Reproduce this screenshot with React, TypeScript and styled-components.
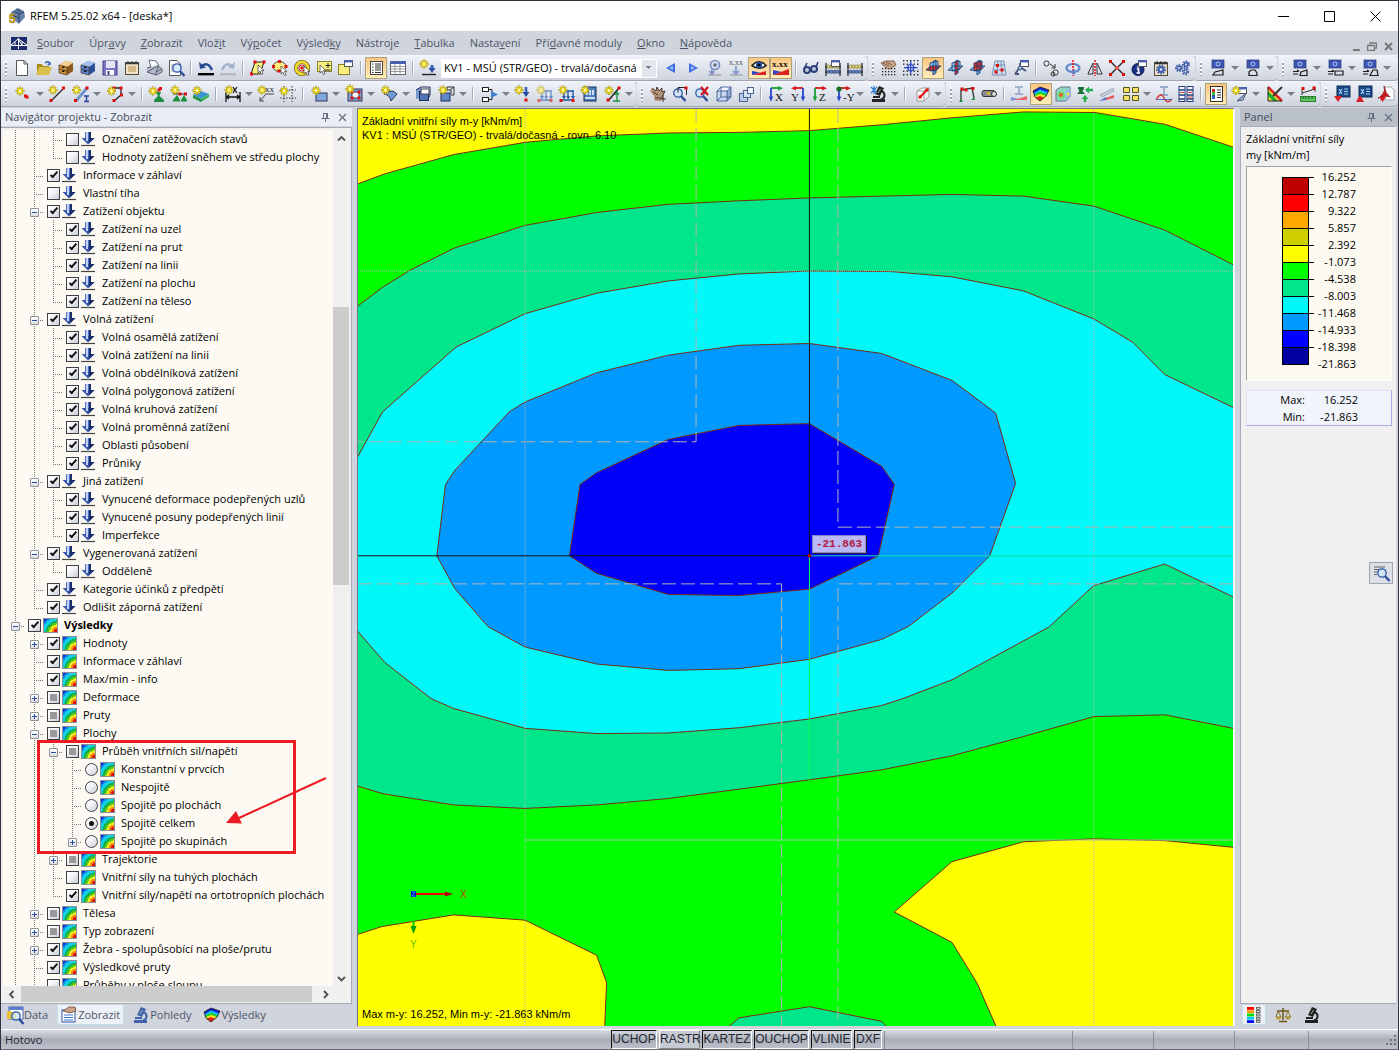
import React from "react";
import styled, { createGlobalStyle } from "styled-components";

const UI = `"Open Sans", "Noto Sans", sans-serif`;

const GlobalStyle = createGlobalStyle`
  *, *::before, *::after { box-sizing: border-box; }
  body { margin: 0; overflow: hidden; }
  button, input, select { font: inherit; color: inherit; }
`;

/* ---------- drawing helpers ---------- */

type P = { d: string; c?: string; w?: number };
const L = ({ d, c = "#222", w = 1 }: P) => <path d={d} fill="none" stroke={c} strokeWidth={w} />;
const F = ({ d, c = "#222" }: P) => <path d={d} fill={c} />;
const Star = ({ x = 4, y = 4 }: { x?: number; y?: number }) => (
  <g transform={`translate(${x} ${y})`}>
    <path d="M0-4.5V4.5M-4.5 0H4.5M-3-3L3 3M3-3L-3 3" stroke="#9a8a1c" strokeWidth="1.8" />
    <path d="M0-4V4M-4 0H4M-2.7-2.7L2.7 2.7M2.7-2.7L-2.7 2.7" stroke="#ffe92e" strokeWidth="1.1" />
    <circle r="1.2" fill="#fffbb0" />
  </g>
);
const Dots = ({ at }: { at: number[][] }) => (
  <>{at.map(([x, y]) => <rect key={`${x}-${y}`} x={x - 1.5} y={y - 1.5} width="3" height="3" fill="#e00d0d" />)}</>
);
const Cursor = ({ x = 9, y = 6 }: { x?: number; y?: number }) => (
  <path transform={`translate(${x} ${y})`} d="M0 0V8L2 6.2L3.4 9.5L5 8.8L3.6 5.6H6Z" fill="#fff" stroke="#333" strokeWidth=".7" />
);
const Lens = ({ x = 7, y = 6 }: { x?: number; y?: number }) => (
  <g>
    <path d={`M${x + 3} ${y + 3}L${x + 7.5} ${y + 8}`} stroke="#2a4d9b" strokeWidth="2.4" />
    <circle cx={x} cy={y} r="4.2" fill="#cfe3fb" fillOpacity=".8" stroke="#2f56a8" strokeWidth="1.3" />
  </g>
);
const Win = ({ x = 7, y = 1 }: { x?: number; y?: number }) => (
  <g>
    <rect x={x + 0.5} y={y + 0.5} width="8" height="6" fill="#fff" stroke="#555" />
    <rect x={x} y={y} width="9" height="2.4" fill="#4a5fae" />
  </g>
);
const Cabinet = ({ a, b, e }: { a: string; b: string; e: string }) => (
  <g>
    <F d="M1 5L8 1L15 3V11L9 15L1 13Z" c={a} />
    <F d="M1 5L8 1L15 3L9 7Z" c={b} />
    <F d="M9 7L15 3V11L9 15Z" c={e} />
    <L d="M1 5L9 7V15L1 13ZM1 9L9 11" c="#43331e" w={0.7} />
    <path d="M4 7.2H6.4M4 11.2H6.4" stroke="#111" strokeWidth="1.6" />
  </g>
);
const Gear = ({ x, y, r, c = "#3f5fa8" }: { x: number; y: number; r: number; c?: string }) => (
  <g>
    <circle cx={x} cy={y} r={r} fill="none" stroke={c} strokeWidth="2" strokeDasharray="1.6 1.1" />
    <circle cx={x} cy={y} r={r - 0.6} fill={c} />
    <circle cx={x} cy={y} r={r / 3} fill="#eef" />
  </g>
);
const Planes = ({ hot }: { hot: string }) => (
  <g>
    <F d="M5 3L13 1V9L5 11Z" c="#9fd0ef" />
    <F d="M8 1.5L11 0V13L8 15Z" c="#6fb0dd" />
    <F d="M1 10L6 6H15L10 11Z" c="#8ec6ea" />
    <F d={hot} c="#e0301e" />
    <L d="M5 3L13 1V9L5 11ZM8 1.5L11 0V13L8 15ZM1 10L6 6H16L10 11Z" c="#1b3f78" w={0.9} />
  </g>
);
const Abacus = () => (
  <g>
    <L d="M1 3V16M15 3V16M0 7H16M0 12H16" c="#1c1c1c" w={1.2} />
    {[4, 7, 10, 13].map((x, i) => <circle key={x} cx={x - 0.4} cy="6.6" r="1.7" fill={i % 2 ? "#f1d44a" : "#e8e06c"} stroke="#554" strokeWidth=".5" />)}
    {[4, 7, 10, 13].map((x) => <circle key={x} cx={x - 0.4} cy="11.8" r="1.7" fill="#6883c9" stroke="#235" strokeWidth=".5" />)}
  </g>
);
const CubeWire = ({ c = "#3e5c96" }: { c?: string }) => (
  <g>
    <F d="M1 5H11V15H1Z" c="#c9d8ef" />
    <F d="M1 5L5 1H15L11 5Z" c="#eef4fc" />
    <F d="M11 5L15 1V11L11 15Z" c="#93abd2" />
    <L d="M1 5H11V15H1ZM1 5L5 1H15L11 5M15 1V11L11 15M5 1V11H15M5 11L1 15" c={c} w={0.9} />
  </g>
);
const Axes = ({ a, b, t, flip }: { a: string; b: string; t: string; flip?: boolean }) => (
  <g>
    <g transform={flip ? "translate(16 0) scale(-1 1)" : undefined}>
      <path d="M3 2H12" stroke={a} strokeWidth="1.8" />
      <path d="M10 0L15 2.2L10 4.6Z" fill={a} />
      <path d="M3 2V12" stroke={b} strokeWidth="1.8" />
      <path d="M.8 10.5H5.2L3 15.5Z" fill={b} />
    </g>
    <text x={flip ? 1 : 7} y="15" fontFamily="Liberation Serif, serif" fontSize="11" fill="#111">{t}</text>
  </g>
);
const Monitor = ({ r }: { r: string }) => (
  <g>
    <rect x="1" y="0" width="12" height="8" fill="#3d57b8" stroke="#28366e" strokeWidth=".7" />
    <circle cx="7" cy="4" r="2" fill="none" stroke="#b9c7f3" />
    <L d={r} c="#1a1a1a" w={1.2} />
  </g>
);
const Microscope = ({ c = "#222" }: { c?: string }) => (
  <g>
    <path d="M1 13H14V16H1ZM8 0L13 2L9 10L4 8Z" fill={c} />
    <path d="M11 5C15 8 14 12 10 13.500M2 11H9" fill="none" stroke={c} strokeWidth="2" />
    <path d="M9.500 3L7 7" stroke="#aaa" />
  </g>
);
const Rainbow = () => (
  <g>
    <F d="M0 5L7 1L16 4L13 10L7 15L2 11Z" c="#1420d8" />
    <F d="M1 7L7 3.500L15 6.500L13 10L7 15L2 11Z" c="#10c8f0" />
    <F d="M1.500 8.500L7 5.500L14 8.500L13 10L7 15L2 11Z" c="#22d12c" />
    <F d="M2 10L7 8L13 10L7 15L2 11Z" c="#f8e81b" />
    <F d="M2.500 11.500L7 10L11 11.700L7 15Z" c="#e8221a" />
    <L d="M0 5L7 1L16 4L13 10L7 15L2 11Z" c="#222" w={0.8} />
  </g>
);
const Supports = ({ c = "#1e56a5" }: { c?: string }) => (
  <g>
    <L d="M5 5H15M5 5V12M9 5V12M14 5V12M2 14H15" c={c} w={1.3} />
    <F d="M3 10H7L5 13.5ZM7.5 10H11L9.2 13.5ZM12 10H16L14 13.5Z" c={c} />
  </g>
);
const Sheet = ({ tri, c }: { tri: string; c: string }) => (
  <g>
    <rect x="3" y="0" width="13" height="11" fill="#174a86" stroke="#0c2c56" />
    <L d="M5 3L8 8M8 3L5 8M10 3H14M10 5.5H14M10 8H14" c="#a9d0f5" w={1.1} />
    <F d={tri} c={c} />
  </g>
);

const ICONS: Record<string, React.ReactNode> = {
  newdoc: <><path d="M2.5.5H10L13.5 4V15.5H2.5Z" fill="#fff" stroke="#555" /><L d="M10 .5V4H13.5" c="#555" /></>,
  open: <><F d="M1 4H6L7 6H13V14H1Z" c="#a78a1c" /><F d="M3 7H16L13 15H0Z" c="#d9c04a" /><L d="M9 3Q12 0 14 4M14 5V2M14 4.5H11.5" c="#3263ae" w={1.4} /></>,
  boxO: <Cabinet a="#cf8f37" b="#f2cf90" e="#8d5a1d" />,
  boxB: <Cabinet a="#5b7fce" b="#a8c0f0" e="#2f4f9b" />,
  save: <><rect x="1" y="1" width="14" height="14" fill="#7a74c4" stroke="#454080" /><rect x="4" y="1" width="9" height="7" fill="#dfe6f6" /><rect x="4" y="10" width="8" height="5" fill="#fff" /><rect x="5.5" y="11" width="2" height="4" fill="#454080" /></>,
  clip: <><rect x="1.5" y="2.5" width="13" height="12" fill="#efe4c8" stroke="#4f4a3b" /><L d="M2 3.5H14" c="#333" w={1.5} /><L d="M4 1V4M8 1V4M12 1V4" c="#444" /><L d="M4 7H12M4 9H12M4 11H12" c="#b98a48" /></>,
  print: <><F d="M3 0L10 1L13 7L5 8Z" c="#fff" /><L d="M3 0L10 1L13 6M3 0L5 8" c="#667" /><F d="M1 8L11 5L16 9V12L10 15L1 12Z" c="#b6bdcc" /><L d="M1 8L5 7M12 6L16 9V12L10 15L1 12ZV8L10 12L15 9.500M10 12V15" c="#555c70" /></>,
  preview: <><path d="M1.5.5H9L12.5 4V15.5H1.5Z" fill="#fff" stroke="#555" /><L d="M3 5H8M3 7H8M3 9H7M3 11H7" c="#999" /><Lens x={9} y={8} /></>,
  undo: <><path d="M4 6Q10 1 14 10" fill="none" stroke="#254a93" strokeWidth="2.4" /><F d="M1 2L2 9L8 7.500Z" c="#254a93" /><rect y="13" width="16" height="2.4" fill="#000" /></>,
  redo: <><path d="M12 6Q6 1 2 10" fill="none" stroke="#a3b2cb" strokeWidth="2.4" /><F d="M15 2L14 9L8 7.500Z" c="#a3b2cb" /><rect y="13" width="16" height="2.4" fill="#b5b9c2" /></>,
  para: <><path d="M5 2H14L10 14H1Z" fill="#fbf07a" stroke="#222" /><Dots at={[[5, 2], [14, 2], [1.5, 14]]} /><Cursor x={8} y={5} /></>,
  lasso: <><ellipse cx="7.5" cy="6.5" rx="6.5" ry="5" fill="#fbf07a" stroke="#555" /><Dots at={[[7.5, 1.5], [1.5, 6.5], [14, 6.5], [7, 11]]} /><Cursor x={9} y={6} /></>,
  ring: <><circle cx="8" cy="8" r="6" fill="none" stroke="#57480f" strokeWidth="4" /><circle cx="8" cy="8" r="6" fill="none" stroke="#f2dc2c" strokeWidth="2.8" /><circle cx="8" cy="8" r="3" fill="#fff" stroke="#c22" /><Dots at={[[8, 8]]} /><Cursor x={10} y={6} /></>,
  selplus: <><rect x="1.5" y="1.5" width="14" height="10" fill="#fbf07a" stroke="#8a8330" /><path d="M12 3V8M9.5 5.5H14.5M9.5 10H14.5" stroke="#222" /><Cursor x={4} y={5} /></>,
  win: <><rect x="0.5" y="4.5" width="11" height="10" fill="#f8ec7c" stroke="#8a8330" /><Win x={6} y={0} /></>,
  nav: <><rect x="2.5" y="1.5" width="12" height="13" fill="#fff" stroke="#444" /><L d="M4 4H5.5M4 7H5.5M4 10H5.5M4 12.5H5.5M7 4H13M7 6H13M7 8H13M7 10H13M7 12.5H13" c="#333" /></>,
  table: <><rect x=".5" y="1.5" width="15" height="13" fill="#fff" stroke="#666" /><rect x="0" y="1" width="16" height="3" fill="#4a5fae" /><L d="M1 6.5H15M1 9H15M1 11.5H15M5 4V14M10 4V14" c="#999" /></>,
  load: <><Star /><path d="M12 5V9" stroke="#3b63bb" strokeWidth="3" /><F d="M8.5 8H15.5L12 13Z" c="#2a4da0" /><L d="M2 14.5H16" c="#222" w={1.4} /></>,
  left: <><F d="M12 3V13L3 8Z" c="#3d6fe0" /><F d="M10 6V10L6 8Z" c="#9dbcf5" /></>,
  right: <><F d="M4 3V13L13 8Z" c="#3d6fe0" /><F d="M6 6V10L10 8Z" c="#9dbcf5" /></>,
  eyeload: <g opacity=".65"><circle cx="8" cy="5" r="4.5" fill="#cdd9ee" stroke="#3d5f9f" strokeWidth="1.6" /><circle cx="8" cy="5" r="1.8" fill="#234" /><L d="M5 8V13M2.5 11L5 14L7.5 11" c="#4e70b8" w={1.8} /><L d="M1 15H14" c="#666" /></g>,
  xload: <g opacity=".7"><text x="0" y="5" fontFamily="Liberation Serif" fontWeight="bold" fontSize="8" fill="#555">x.xx</text><L d="M7 6V13M4 11L7 14L10 11" c="#6a88c8" w={2} /><L d="M1 15H14" c="#777" /></g>,
  eye: <><path d="M1 5.500Q8-2 15 5.500Q8 11 1 5.500Z" fill="#fff" stroke="#222" strokeWidth="1.6" /><circle cx="8" cy="5" r="3.200" fill="#2a56a8" /><circle cx="8" cy="5" r="1.5" fill="#000" /><F d="M1 15L15 11V15Z" c="#d22" /><F d="M1 11V15L9 12.500Z" c="#2b46c5" /></>,
  xxx: <><text x="-1" y="6.5" fontFamily="Liberation Serif" fontWeight="bold" fontSize="9" fill="#111">x.xx</text><F d="M0 10V15L9 12Z" c="#2b46c5" /><F d="M0 15L16 9V15Z" c="#d22" /></>,
  glasses: <><circle cx="4" cy="10" r="3" fill="#bcd" stroke="#2b3f78" strokeWidth="2" /><circle cx="11" cy="9" r="3" fill="#bcd" stroke="#2b3f78" strokeWidth="2" /><L d="M1.500 8L4 3M13 7L15 2" c="#2b3f78" w={1.6} /></>,
  abacusW: <><Abacus /><Win x={6} y={0} /></>,
  abacus: <Abacus />,
  handgrid: <><g fill="#222">{[0, 3, 6, 9, 12].map((x) => [8, 11, 14].map((y) => <rect key={`${x}${y}`} x={x + 1} y={y} width="1.3" height="1.3" />))}</g><F d="M0 3L5 1L13 1L15 5L9 9L4 7Z" c="#c9a488" /><L d="M2 3L8 6M5 2L11 5M0 3L5 1H13L15 5L9 9L4 7Z" c="#6d4a36" w={0.8} /></>,
  gridcross: <><g fill="#222">{[0, 3.5, 7, 10.5, 14].map((x) => [0, 3.5, 10.5, 14].map((y) => <rect key={`${x}-${y}`} x={x} y={y} width="1.4" height="1.4" />))}</g><circle cx="7.7" cy="7.7" r="3" fill="#fff" stroke="#2b46c5" strokeWidth="1.3" /><L d="M7.7 1V14.5M1 7.7H14.5" c="#2b46c5" w={1.2} /></>,
  planeH: <Planes hot="M1 10L6 6H15L10 11Z" />,
  planeV: <Planes hot="M8 1.5L11 0V13L8 15Z" />,
  planeF: <Planes hot="M5 3L13 1V9L5 11Z" />,
  mesh: <><path d="M4 1H13L15 15H1Z" fill="#cfe0f2" stroke="#7d93b5" /><L d="M7 1L6 15M10 1L11 15M3 5H14M2 10H15" c="#7d93b5" /><Dots at={[[6.5, 5.5], [11, 10], [5, 12]]} /></>,
  cubes: <><L d="M2 14L7 7M7 7V3M7 7L13 11M2 14H6" c="#445577" w={1.8} /><Win x={7} y={0} /><circle cx="7" cy="8" r="2" fill="#a9c0e6" stroke="#445577" /></>,
  circ2: <><circle cx="3.5" cy="3.5" r="2.6" fill="none" stroke="#333" /><circle cx="12.5" cy="12.5" r="2.6" fill="#eee" stroke="#333" /><circle cx="10" cy="14" r="2" fill="none" stroke="#333" /><L d="M7 4L12 7.5M12 4V8H8.5" c="#333" /></>,
  rotate: <><ellipse cx="8" cy="8" rx="6.5" ry="4" fill="none" stroke="#5b86c9" strokeWidth="2.2" /><path d="M8 0V16" stroke="#e00" strokeDasharray="2 1" strokeWidth="1.4" /><F d="M10 9V15L5 12Z" c="#5b86c9" /></>,
  mirror: <><path d="M8 0V16" stroke="#e00" strokeDasharray="2 1" strokeWidth="1.4" /><L d="M6 3V14H.8ZM10 3V14H15.2Z" c="#333" /></>,
  redX: <><L d="M2 2L14 14M14 2L2 14" c="#222" w={1.4} /><circle cx="8" cy="8" r="2" fill="#e55" /><Dots at={[[1.5, 1.5], [14.5, 1.5], [1.5, 14.5], [14.5, 14.5]]} /></>,
  info: <><circle cx="7" cy="9.5" r="6" fill="#1a2f86" stroke="#0d1848" /><path d="M7 6V7.8M5.8 9H7.6V13M5.5 13H9" stroke="#fff" strokeWidth="1.6" fill="none" /><Win x={7} y={0} /></>,
  gearwin: <><rect x="1.5" y="2.5" width="13" height="13" fill="#efe4c8" stroke="#4f4a3b" /><L d="M2 3.500H14" c="#333" w={1.500} /><L d="M4 1V3M8 1V3M12 1V3" c="#333" /><Gear x={8} y={9.500} r={4} /></>,
  gears: <><Gear x={4} y={8} r={3} /><Gear x={11} y={4.5} r={3} /><Gear x={10.5} y={11.5} r={2.7} /></>,
  vA: <Monitor r="M2 15H12V10L4 12Z" />,
  vB: <Monitor r="M3 15.5H11V13L9 10H5L3 12Z" />,
  vC: <Monitor r="M0 11.5H5M0 14H5M4 10L6 11.5M7 15.5H14V10L8 12Z" />,
  vD: <Monitor r="M0 11.5H5M0 14H5M4 10L6 11.5M7 15H15V11H7Z" />,
  vE: <Monitor r="M0 11.5H5M0 14H5M4 10L6 11.5M7 15.5H15L14 10H10Z" />,
  pt: <><Star x={4} y={5} /><Dots at={[[11, 11], [9.5, 10]]} /></>,
  line: <><L d="M2 15L15 2" w={1.3} /><Dots at={[[2, 14.5], [14.5, 2]]} /><Star x={4} y={4} /></>,
  lineI: <><L d="M3 15L14 2" c="#6f97cf" w={3} /><Dots at={[[2.5, 14.5], [14, 2]]} /><Star x={3.5} y={4} /><L d="M11 10H16M11 15.5H16M13.5 10V15.5" c="#26439a" w={1.4} /></>,
  poly: <><L d="M4 2H13V9L6 15" w={1.3} /><Dots at={[[13, 2], [13.5, 9], [6, 14.5], [6, 2]]} /><Star x={3.5} y={5} /></>,
  nodeSup: <><Dots at={[[11.5, 2.5], [10, 4]]} /><F d="M7 6H12L10.5 10L15 14V16H5V14L9 10Z" c="#1d8f3e" /><Star x={4} y={5} /></>,
  lineSup: <><L d="M2 8H15" /><Dots at={[[9, 8], [14.5, 8]]} /><F d="M6 9L9 14V15.5H2V14ZM13 9L16 14V15.5H10V14Z" c="#1d8f3e" /><Star x={4} y={4} /></>,
  surf: <><F d="M0 9L8 5L16 8L8 13Z" c="#3d97d6" /><F d="M0 9L8 13V16L0 12Z" c="#1d8f3e" /><F d="M8 13L16 8V11L8 16Z" c="#34b457" /><Star x={4} y={4.5} /></>,
  dim: <><L d="M1 6V16M15 6V16M1 11H15M4 9L1.500 11L4 13M12 9L14.500 11L12 13" c="#111" w={1.3} /><L d="M8 1L12 7M12 1L8 7" c="#111" w={1.2} /><Star x={4} y={4} /></>,
  dimxx: <><L d="M2 15L8 8H16M2 11V15H6" c="#444" /><text x="7" y="6" fontFamily="Liberation Serif" fontSize="9" fill="#222">xx</text><Star x={4} y={4} /></>,
  gridstar: <><path d="M4 0V16M12 0V16M0 4H16M0 12H16" stroke="#333" strokeDasharray="1.500 1.500" fill="none" /><Star x={4} y={5} /></>,
  area: <><rect x="4" y="7" width="11" height="8" fill="#7fa9dd" stroke="#335" /><Star x={4} y={4.5} /></>,
  opening: <><rect x="1" y="3" width="14" height="12" fill="#7fa9dd" stroke="#335" /><rect x="5" y="6" width="7" height="6" fill="#fff" stroke="#335" /><Dots at={[[5, 6], [12, 6], [5, 12], [12, 12]]} /><Star x={3} y={3} /></>,
  shell: <><path d="M2 8Q10 2 15 8L9 15Q8 9 2 8Z" fill="#6d9bd8" stroke="#335" /><Star x={3.500} y={4} /></>,
  solid: <><F d="M1 4L6 1V12L1 13Z" c="#7898cd" /><rect x="4.500" y="5.500" width="9" height="9" fill="#4f74b5" stroke="#1d2f5c" /><path d="M1 4L6 1H15V9L13 13" fill="none" stroke="#1d2f5c" /><rect x="6" y="3" width="8" height="5" fill="#fff" stroke="#445" /></>,
  solidset: <><rect x="2" y="7" width="9" height="8" fill="#5f88c9" stroke="#1d2f5c" /><path d="M8 5V1H15V9H12" fill="none" stroke="#333" /><path d="M11 4L15 1M8 4H12V8" fill="none" stroke="#333" /><Star x={4} y={4} /></>,
  joint: <><rect x=".5" y="1.500" width="6" height="4" fill="#fff" stroke="#222" /><rect x=".5" y="11.500" width="6" height="4" fill="#fff" stroke="#222" /><L d="M7 3.500H10V6M7 13.500H10V11" /><F d="M9 5L16 8.500L9 12Z" c="#3d7ed0" /></>,
  starload: <><Star x={4} y={4} /><path d="M11 1V7" stroke="#3b63bb" strokeWidth="2.600" /><F d="M7.500 6H14.500L11 11Z" c="#2a4da0" /><Dots at={[[11, 14]]} /></>,
  loadg: <g opacity=".6"><Supports /><Star x={4} y={4} /><Dots at={[[2, 14.500], [14, 14.500]]} /></g>,
  load2: <><Supports /><Star x={4} y={4} /><Dots at={[[2, 14.500], [14, 14.500]]} /></>,
  load3: <><rect x="3" y="1" width="12" height="14" fill="#4d7fc0" stroke="#1d2f5c" /><L d="M6 4V9M9 4V9M12 4V9M4 12H14" c="#fff" w={1.500} /><Star x={4} y={4} /></>,
  loadline: <><L d="M3 15L14 2" c="#222" w={1.500} /><Dots at={[[14, 2], [3, 14]]} /><L d="M12 6V15M8 15H15M10 9L12 6L14 9" c="#1d8f3e" w={1.300} /><Star x={4} y={4.500} /></>,
  hand: <><F d="M2 2L6 5L7 1L9 5L12 2L12 6L15 5L12 11L11 15H5L4 10L0 5Z" c="#b3927a" /><L d="M2 2L6 5L7 1L9 5L12 2V6L15 5L12 11M3 6L8 9M5 12H14M13 9V16M10 13H16" c="#4c3426" w={1} /></>,
  zoomwin: <><Lens x={6} y={7} /><path d="M6 6.500V1.500H14.500V9" fill="none" stroke="#222" /><Dots at={[[14, 2]]} /></>,
  zoomX: <><Lens x={6} y={7} /><L d="M7 1L14 9M14 1L7 9" c="#d2131b" w={2.200} /></>,
  cube: <CubeWire />,
  cubes2: <><rect x="1.500" y="7.500" width="8" height="8" fill="#b9cbe6" stroke="#4c638f" /><rect x="5.500" y="4.500" width="7" height="7" fill="#d5e1f3" stroke="#4c638f" /><rect x="9.500" y="1.500" width="6" height="6" fill="#eef3fb" stroke="#4c638f" /></>,
  axX: <Axes a="#17a035" b="#2743c9" t="X" />,
  axY: <Axes a="#d41c1c" b="#2743c9" t="Y" flip />,
  axZ: <Axes a="#d41c1c" b="#17a035" t="Z" />,
  axmY: <><Axes a="#d41c1c" b="#2743c9" t="-Y" /><circle cx="3" cy="3" r="2.600" fill="#156f26" /></>,
  micro: <><Microscope /><L d="M0 1L6 7M6 1L0 7M3 0V8" c="#2b7ad1" w={1.200} /></>,
  cubeRed: <><path d="M3 5L8 2H15V10L10 15H3Z" fill="#fff" stroke="#999" /><L d="M3 5H10V15M10 5L15 2" c="#999" /><L d="M6 11L13 4" c="#d11" w={2} /><Dots at={[[6, 11], [13, 4]]} /></>,
  frame: <><L d="M2 15V4L13 2L15 12" c="#333" w={1.300} /><Dots at={[[3, 3], [7, 4], [14, 2.500]]} /><F d="M0 16L2 13L4 16ZM12 14L15 11L16 14Z" c="#1d8f3e" /></>,
  tube: <><rect x="1" y="4.500" width="13" height="6" rx="2" fill="#8c8c8c" stroke="#333" /><circle cx="13" cy="8" r="2.500" fill="#ddd" stroke="#333" /><rect x="6" y="6.500" width="3" height="2" fill="#e4c500" /></>,
  Idia: <><L d="M4 1H12M8 1V8M4 8H12" c="#8ea3c4" w={1.500} /><F d="M0 11V15L8 13Z" c="#7d90d8" /><F d="M3 14L16 10V14Z" c="#e66" /></>,
  surfcol: <Rainbow />,
  cubecol: <><path d="M1 4L6 1H15V11L11 15H1Z" fill="#8fd6c9" stroke="#678" /><circle cx="6" cy="9" r="3.800" fill="#6ee06e" /><circle cx="6" cy="9" r="2" fill="#ee5a3a" /><path d="M11 5L15 2V11L11 15Z" fill="#9ab4e8" /><circle cx="13" cy="8" r="1.500" fill="#f3e83c" /></>,
  treearr: <><F d="M1 1H7V3L5.500 5L8 8H0L2.500 5L1 3Z" c="#1d6f35" /><L d="M11 4H16M8 16V12" c="#21b04a" w={2.400} /><F d="M8 4L12 0.500V7.500ZM4.500 13L8 9L11.500 13Z" c="#21b04a" /></>,
  bars: <><path d="M1 9L14 2L15 5L3 11Z" fill="#c3cbd8" stroke="#8a94a8" strokeWidth=".6" /><F d="M0 15L7 11V14Z" c="#5670d0" /><F d="M7 12L15 9V12L7 14Z" c="#e35a5a" /></>,
  boxes: <>{[[0, 1], [9, 1], [0, 9], [9, 9]].map(([x, y]) => <path key={`${x}${y}`} d={`M${x + 0.5} ${y + 0.5}h6v5h-6z`} fill="#f4e26b" stroke="#5d5418" />)}</>,
  Ired: <><L d="M4 1H12M8 1V9M4 9H12" c="#7f97c4" w={1.300} /><L d="M0 14Q5 5 8 12T16 13" c="#d33" w={1.300} /><L d="M0 13.500H16" c="#4d66b5" /></>,
  tablered: <><rect x="1" y="0.500" width="6" height="15" fill="#fff" stroke="#223a7a" /><rect x="9" y="0.500" width="6" height="15" fill="#fff" stroke="#223a7a" /><L d="M1 4H7M9 4H15M1 9H7M9 9H15M1 13H7M9 13H15" c="#223a7a" w={1.500} /><L d="M2 6.500H6M10 6.500H14M10 11H14" c="#d33" w={1.200} /></>,
  listcol: <><rect x="2.500" y=".5" width="12" height="15" fill="#fff" stroke="#333" /><rect x="4" y="3" width="3" height="3" fill="#d22" /><rect x="4" y="6" width="3" height="3" fill="#3b3" /><rect x="4" y="9" width="3" height="4" fill="#26c" /><L d="M9 4H13M9 6.500H13M9 9H13M9 11.500H13" c="#333" /></>,
  wingear: <><Win x={6} y={1} /><path d="M5 15L14 7L11 14Z" fill="#96a7c8" stroke="#4b5c7f" /><Star x={4} y={4.500} /></>,
  crossed: <><path d="M1 1V15H15Z" fill="#f1e02c" /><path d="M1 5L11 15H6L1 10Z" fill="#1fae3a" /><path d="M1 1L15 15" stroke="#d22" strokeWidth="2.500" /><path d="M6 10L15 1" stroke="#333" strokeWidth="2" /><L d="M1 1V15H15" c="#222" /></>,
  ruler: <><L d="M2 7L15 3M2 4V9M15 1V6" c="#333" /><Dots at={[[3, 2.500], [14, 2]]} /><rect x="0.500" y="10.500" width="15" height="5" fill="#5ec65e" stroke="#2a7e2a" /><L d="M3 11V13M6 11V13M9 11V13M12 11V13" c="#143" /></>,
  xls1: <Sheet tri="M0 10H8L4 16Z" c="#d81f26" />,
  xls2: <Sheet tri="M4 9L8 16H0Z" c="#d81f26" />,
  pdf: <><path d="M7 1H13L16 4V14H7Z" fill="#fff" stroke="#aaa" /><path d="M6 0Q8 5 4 9T0 12Q8 9 12 11Q7 7 6 0Z" fill="#c91c1c" stroke="#8f1010" strokeWidth=".8" /><F d="M1 11H8L4.500 16Z" c="#d81f26" /></>,
  microscope: <Microscope />,
  microBlue: <Microscope c="#3f63ad" />,
  dataTab: <><rect x="2" y="0" width="14" height="12" fill="#fff" stroke="#4a5fae" /><rect x="2" y="0" width="14" height="3" fill="#5b7fd0" /><F d="M0 4H4L5 5H9V12H0Z" c="#e4c23a" /><Lens x={9} y={9} /></>,
  viewTab: <><rect x="1" y="3" width="13" height="12" fill="#fff" stroke="#2c56a5" /><L d="M3 8H12M3 10.500H12M3 13H12" c="#3e7ad0" w={1.200} /><F d="M2 4L8 0H14L15 4L9 6Z" c="#c9a488" /><L d="M2 4L8 0H14L15 4L9 6Z" c="#6d4a36" w={0.800} /></>,
  rainbowTab: <Rainbow />,
  legendTab: <>{["#f00", "#ff9b00", "#0d0", "#0cf", "#00f"].map((c, i) => <g key={c}><rect x="1" y={i * 3.300} width="7" height="2.800" fill={c} /><rect x="10.500" y={i * 3.300 + 0.300} width="3.500" height="2" fill="#ddd" stroke="#555" strokeWidth=".8" /></g>)}</>,
  scales: <><path d="M8 1V13M2 4H14M4 14.500H12" stroke="#6c5414" strokeWidth="1.500" /><L d="M3 4L1 10H6ZM13 4L10.500 10H15.500Z" c="#8d7424" /><F d="M.500 10H6.500L5 12.500H2ZM10 10H16L14.500 12.500H11.500Z" c="#b89a35" /></>,
  loupe: <><L d="M1 2H12M1 4.500H12M1 7H5M1 9.500H4" c="#666" w={1.200} /><Lens x={9} y={8} /></>,
  app: <><F d="M2 4L9 0L15 3L16 9L10 16L5 12Z" c="#6480a8" /><L d="M5 3L10 6L15 4M10 6V14M7 1L12 4M4 7L9 10" c="#2b3d5c" /><text x="0" y="14.500" fontFamily="Liberation Sans" fontWeight="bold" fontSize="12" fill="#f3c81c" stroke="#664b00" strokeWidth=".5">5</text></>,
};

const IconSvg = styled.svg`
  flex: none;
  overflow: visible;
`;
const Glyph = ({ n }: { n: string }) => (
  <IconSvg width="16" height="16" viewBox="0 0 16 16" aria-hidden="true">{ICONS[n]}</IconSvg>
);

/* ---------- window frame ---------- */

const Shell = styled.div`
  display: flex;
  flex-direction: column;
  height: 100vh;
  border: solid #35303f;
  border-width: 1px 1px 0 1px;
  background: #d0d4dd;
  font: 11px/16px ${UI};
  color: #000;
`;
const TitleBar = styled.header`
  display: flex;
  align-items: center;
  height: 30px;
  flex: none;
  padding-left: 8px;
  background: #fff;
`;
const Title = styled.h1`
  flex: 1;
  margin: 0;
  padding-left: 5px;
  font: 11px/16px ${UI};
`;
const WindowButton = styled.button`
  display: grid;
  place-items: center;
  width: 46px;
  height: 30px;
  padding: 0;
  border: 0;
  background: none;
`;
const MenuBar = styled.nav`
  display: flex;
  align-items: center;
  height: 24px;
  flex: none;
  padding-left: 10px;
`;
const Grip = styled.span`
  width: 2px;
  height: 15px;
  margin: 0 4px;
  flex: none;
  background: repeating-linear-gradient(#fff 0 2px, #9aa1b0 2px 4px);
`;
const MenuButton = styled.button`
  border: 0;
  padding: 0;
  margin-right: 15px;
  background: none;
  color: #4d5567;
  white-space: nowrap;
`;
const Menus = styled.div`
  display: flex;
  flex: 1;
  padding-left: 10px;
`;
const MdiButtons = styled.div`
  display: flex;
  align-self: flex-end;
  gap: 2px;
  padding-right: 3px;
`;
const MdiButton = styled.button`
  display: grid;
  place-items: center;
  width: 14px;
  height: 18px;
  padding: 0;
  border: 0;
  background: none;
`;

/* ---------- toolbars ---------- */

const ToolRow = styled.div`
  display: flex;
  height: 26px;
  flex: none;
  gap: 1px;
  border-top: 1px solid #f4f5f9;
`;
const ToolGroup = styled.div<{ $grow?: boolean }>`
  display: flex;
  align-items: center;
  flex: ${(p) => (p.$grow ? "1" : "none")};
  padding-right: 1px;
  border-radius: 0 4px 4px 0;
  border-bottom: 1px solid #9fa5b3;
  background: linear-gradient(#eff2f8, #dfe3ec 50%, #ced3de);
`;
const ToolButton = styled.button<{ $on?: boolean; $split?: boolean }>`
  display: flex;
  align-items: center;
  gap: 4px;
  width: ${(p) => (p.$split ? "35px" : "22px")};
  height: 22px;
  flex: none;
  padding: 0 0 0 ${(p) => (p.$split ? "4px" : "2px")};
  border: 1px solid ${(p) => (p.$on ? "#b0a07c" : "transparent")};
  background: ${(p) => (p.$on ? "linear-gradient(#fbc780, #fdd9a0 50%, #ffedb8)" : "none")};
`;
const Caret = styled.span`
  border: solid transparent;
  border-width: 4px 4px 0;
  border-top-color: #7a7f8a;
`;
const ToolSep = styled.span`
  width: 2px;
  height: 14px;
  margin: 0 3px;
  flex: none;
  background: linear-gradient(90deg, #a5abb8 50%, #fff 50%);
`;
const CaseSelect = styled.select`
  appearance: none;
  width: 216px;
  height: 19px;
  margin: 0 3px 0 2px;
  padding: 0 14px 0 2px;
  border: 1px solid #fff;
  border-radius: 0;
  font: 11px/16px ${UI};
  background:
    linear-gradient(#7a7f8a, #7a7f8a) right 5px top 6px / 5px 1px no-repeat,
    linear-gradient(#7a7f8a, #7a7f8a) right 6px top 7px / 3px 1px no-repeat,
    linear-gradient(#7a7f8a, #7a7f8a) right 7px top 8px / 1px 1px no-repeat,
    linear-gradient(#e2e5ec, #e2e5ec) right / 14px 100% no-repeat,
    #fff;
`;

const ROW1 = [
  "newdoc open boxO boxB save clip print preview | undo redo | para lasso ring selplus win | nav* table | load # left right eyeload xload eye* xxx* | glasses abacusW abacus",
  "handgrid gridcross planeH* planeV planeF mesh cubes | circ2 rotate mirror redX info gearwin gears",
  "vA> vB>",
  "vC> vD> vE>",
];
const ROW2 = [
  "pt> line lineI> poly> | nodeSup lineSup surf | dim> dimxx gridstar | area> opening> shell> solid solidset> | joint> starload loadg load2 load3 loadline>",
  "hand zoomwin zoomX cube cubes2 | axX axY axZ axmY> micro> | cubeRed>",
  "frame tube | Idia surfcol* cubecol treearr bars boxes> Ired tablered | listcol* wingear> crossed> ruler",
  "xls1 xls2 pdf",
];

const Tools = ({ rows }: { rows: string[] }) => (
  <ToolRow role="toolbar">
    {rows.map((r, g) => (
      <ToolGroup key={r} $grow={g === rows.length - 1}>
        <Grip />
        {r.split(" ").map((t, i) => {
          if (t === "|") return <ToolSep key={i} />;
          if (t === "#")
            return (
              <CaseSelect key={i} aria-label="Zatěžovací stav">
                <option>KV1 - MSÚ (STR/GEO) - trvalá/dočasná</option>
              </CaseSelect>
            );
          const name = t.replace(/[*>]/, "");
          const split = t.endsWith(">");
          return (
            <ToolButton key={i} type="button" aria-label={name} $on={t.endsWith("*")} $split={split}>
              <Glyph n={name} />
              {split && <Caret />}
            </ToolButton>
          );
        })}
      </ToolGroup>
    ))}
  </ToolRow>
);

/* ---------- side panels ---------- */

const Workspace = styled.main`
  display: grid;
  grid-template-columns: 351px minmax(0, 1fr) 158px;
  gap: 5px;
  flex: 1;
  min-height: 0;
  padding: 1px 0 3px;
`;
const SidePanel = styled.section`
  display: flex;
  flex-direction: column;
  min-width: 0;
  min-height: 0;
`;
const PanelHead = styled.div<{ $dim?: boolean }>`
  display: flex;
  align-items: center;
  gap: 8px;
  height: 18px;
  flex: none;
  padding: 0 5px 0 4px;
  background: ${(p) => (p.$dim ? "#b9c0ca" : "#e9edf5")};
  color: #444b5a;
`;
const PanelTitle = styled.h2`
  flex: 1;
  margin: 0;
  font: 11px/16px ${UI};
`;
const HeadButton = styled.button`
  display: grid;
  place-items: center;
  width: 9px;
  height: 12px;
  padding: 0;
  border: 0;
  background: none;
`;
const HeadTools = () => (
  <>
    <HeadButton aria-label="Připnout">
      <svg width="9" height="10" viewBox="0 0 9 10"><path d="M2.500 1V6M6.500 1V6M2 1.500H7M5.500 1V6M0.500 6.500H8.500M4.500 6V10" stroke="#6a7080" fill="none" /></svg>
    </HeadButton>
    <HeadButton aria-label="Zavřít">
      <svg width="9" height="9" viewBox="0 0 9 9"><path d="M1 1L8 8M8 1L1 8" stroke="#6a7080" strokeWidth="1.300" /></svg>
    </HeadButton>
  </>
);
const TreeFrame = styled.div`
  display: grid;
  grid-template: minmax(0, 1fr) 17px / minmax(0, 1fr) 18px;
  flex: 1;
  min-height: 0;
  margin-top: 1px;
  padding: 2px 0 0 2px;
  border: 1px solid #a5abb8;
  border-left: 0;
  background: #f0f0f0;
`;
const Tree = styled.div`
  position: relative;
  overflow: hidden;
  background: #fcfaf3;
`;
const TreeRow = styled.div`
  display: flex;
  align-items: center;
  height: 18px;
  padding-left: 3px;
  white-space: nowrap;
`;
const Guide = styled.span<{ $v: "full" | "half" | "none"; $h?: boolean }>`
  display: grid;
  place-items: center;
  width: 19px;
  height: 18px;
  flex: none;
  background-repeat: no-repeat;
  background-image:
    repeating-linear-gradient(#777 0 1px, transparent 1px 2px),
    repeating-linear-gradient(90deg, #777 0 1px, transparent 1px 2px);
  background-position: 9px 0, 9px 10px;
  background-size:
    ${(p) => (p.$v === "none" ? "0 0" : p.$v === "full" ? "1px 18px" : "1px 10px")},
    ${(p) => (p.$h ? "10px 1px" : "0 0")};
`;
const Expander = styled.button`
  display: grid;
  place-items: center;
  width: 9px;
  height: 9px;
  margin-top: 2px;
  padding: 0;
  border: 1px solid #8f9299;
  border-radius: 1px;
  background: linear-gradient(#fff, #dedfe3);
`;
const TreeLabel = styled.label<{ $bold?: boolean }>`
  display: flex;
  align-items: center;
  gap: 2px;
  padding-left: 3px;
  font: ${(p) => (p.$bold ? "bold" : "normal")} 11px/18px ${UI};
`;
const TreeText = styled.span`
  padding-left: 3px;
`;
const Tick = styled.input<{ $mixed?: boolean }>`
  appearance: none;
  display: grid;
  place-items: center;
  width: 13px;
  height: 13px;
  margin: 0;
  flex: none;
  border: 1px solid #3f3f44;
  border-radius: ${(p) => (p.type === "radio" ? "50%" : "0")};
  background: linear-gradient(135deg, #fff, #f4f5f8 40%, #c9cdd8);
  &::after {
    content: "";
    display: ${(p) => (p.$mixed ? "block" : "none")};
    width: 7px;
    height: 7px;
    background: #999;
  }
  &[type="checkbox"]:checked::after {
    display: block;
    width: 8px;
    height: 4px;
    margin-top: -3px;
    border: solid #111;
    border-width: 0 0 2px 2px;
    background: none;
    transform: rotate(-48deg);
  }
  &[type="radio"]:checked::after {
    display: block;
    width: 5px;
    height: 5px;
    border-radius: 50%;
    background: #111;
  }
`;
const ResultIcon = styled.span`
  width: 15px;
  height: 15px;
  margin-right: 1px;
  border: 1px solid #8b8f96;
  background: radial-gradient(circle at 110% 110%, #e01010 0 5px, #f58a10 5px 7px, #f8ee20 7px 9px, #58c818 9px 11px, #10b050 11px 13px, #10d0e8 13px 16px, #1088e8 16px 18px, #1030e0 18px);
`;
const LoadIcon = () => (
  <svg width="16" height="16" viewBox="0 0 16 16" aria-hidden="true">
    <rect x="4" y="1" width="6" height="7" fill="#5272c4" />
    <path d="M0.500 7H13.500L7 13.500Z" fill="#3757ad" />
    <rect x="5" y="1" width="2" height="9" fill="#c3d2f5" />
    <path d="M8 1H10V7H13.500L8 12.500Z" fill="#1d2f6b" />
    <path d="M0 14.500H14" stroke="#444" strokeWidth="1.200" />
  </svg>
);

/* level, state, text, expander */
type Node = [number, "1" | "0" | "m" | "r" | "R", string, ("+" | "-")?];
const LOAD_ROWS: Node[] = [
  [2, "0", "Označení zatěžovacích stavů"],
  [2, "0", "Hodnoty zatížení sněhem ve středu plochy"],
  [1, "1", "Informace v záhlaví"],
  [1, "0", "Vlastní tíha"],
  [1, "1", "Zatížení objektu", "-"],
  [2, "1", "Zatížení na uzel"],
  [2, "1", "Zatížení na prut"],
  [2, "1", "Zatížení na linii"],
  [2, "1", "Zatížení na plochu"],
  [2, "1", "Zatížení na těleso"],
  [1, "1", "Volná zatížení", "-"],
  [2, "1", "Volná osamělá zatížení"],
  [2, "1", "Volná zatížení na linii"],
  [2, "1", "Volná obdélníková zatížení"],
  [2, "1", "Volná polygonová zatížení"],
  [2, "1", "Volná kruhová zatížení"],
  [2, "1", "Volná proměnná zatížení"],
  [2, "1", "Oblasti působení"],
  [2, "1", "Průniky"],
  [1, "1", "Jiná zatížení", "-"],
  [2, "1", "Vynucené deformace podepřených uzlů"],
  [2, "1", "Vynucené posuny podepřených linií"],
  [2, "1", "Imperfekce"],
  [1, "1", "Vygenerovaná zatížení", "-"],
  [2, "0", "Odděleně"],
  [1, "1", "Kategorie účinků z předpětí"],
  [1, "1", "Odlišit záporná zatížení"],
];
const RESULT_ROWS: Node[] = [
  [0, "1", "Výsledky", "-"],
  [1, "1", "Hodnoty", "+"],
  [1, "1", "Informace v záhlaví"],
  [1, "1", "Max/min - info"],
  [1, "m", "Deformace", "+"],
  [1, "m", "Pruty", "+"],
  [1, "m", "Plochy", "-"],
  [2, "m", "Průběh vnitřních sil/napětí", "-"],
  [3, "r", "Konstantní v prvcích"],
  [3, "r", "Nespojitě"],
  [3, "r", "Spojitě po plochách"],
  [3, "R", "Spojitě celkem"],
  [3, "r", "Spojitě po skupinách", "+"],
  [2, "m", "Trajektorie", "+"],
  [2, "0", "Vnitřní síly na tuhých plochách"],
  [2, "1", "Vnitřní síly/napětí na ortotropních plochách"],
  [1, "m", "Tělesa", "+"],
  [1, "m", "Typ zobrazení", "+"],
  [1, "1", "Žebra - spolupůsobící na ploše/prutu", "+"],
  [1, "1", "Výsledkové pruty"],
  [1, "0", "Průběhy v ploše sloupu"],
];
const ROWS = [...LOAD_ROWS, ...RESULT_ROWS];

/* does the guide line of a level go on below row i; the list itself goes on past its last row */
const goesOn = (i: number, level: number) => {
  for (let k = i + 1; k < ROWS.length; k++) {
    if (ROWS[k][0] === level) return true;
    if (ROWS[k][0] < level) return false;
  }
  return level < 2;
};

const TreeRows = () => (
  <>
    {ROWS.map(([lvl, st, text, exp], i) => {
      const radio = st === "r" || st === "R";
      return (
        <TreeRow key={i}>
          {Array.from({ length: lvl }, (_, l) => <Guide key={l} $v={goesOn(i, l) ? "full" : "none"} />)}
          <Guide $v={goesOn(i, lvl) ? "full" : "half"} $h>
            {exp && (
              <Expander type="button" aria-label={exp === "+" ? "Rozbalit" : "Sbalit"}>
                <svg width="7" height="7" viewBox="0 0 7 7"><path d={exp === "+" ? "M1 3.500H6M3.500 1V6" : "M1 3.500H6"} stroke="#2b4fa0" /></svg>
              </Expander>
            )}
          </Guide>
          <TreeLabel $bold={lvl === 0}>
            <Tick
              type={radio ? "radio" : "checkbox"}
              name={radio ? "prubeh" : undefined}
              defaultChecked={st === "1" || st === "R"}
              $mixed={st === "m"}
            />
            {i < LOAD_ROWS.length ? <LoadIcon /> : <ResultIcon />}
            <TreeText>{text}</TreeText>
          </TreeLabel>
        </TreeRow>
      );
    })}
  </>
);
const MarkBox = styled.div`
  position: absolute;
  left: 34px;
  top: 610px;
  width: 259px;
  height: 114px;
  border: 3px solid #ed1c24;
`;
const MarkArrow = styled.svg`
  position: absolute;
  left: 222px;
  top: 645px;
`;
const Scroll = styled.div<{ $row?: boolean }>`
  display: flex;
  flex-direction: ${(p) => (p.$row ? "row" : "column")};
  align-items: center;
  padding: ${(p) => (p.$row ? "0 0 1px" : "0 2px 0 0")};
`;
const ScrollButton = styled.button`
  display: grid;
  place-items: center;
  width: 16px;
  height: 16px;
  padding: 0;
  border: 0;
  background: none;
`;
const Track = styled.div<{ $row?: boolean }>`
  display: flex;
  flex-direction: ${(p) => (p.$row ? "row" : "column")};
  flex: 1;
  align-self: stretch;
`;
const Thumb = styled.div<{ $size: number }>`
  flex: ${(p) => p.$size};
  background: #cdcdcd;
`;
const Space = styled.div<{ $size: number }>`
  flex: ${(p) => p.$size};
`;
const Chevron = ({ d }: { d: string }) => (
  <svg width="9" height="9" viewBox="0 0 9 9"><path d={d} fill="none" stroke="#505050" strokeWidth="1.800" /></svg>
);
const TabStrip = styled.div`
  display: flex;
  align-items: center;
  height: 22px;
  flex: none;
  padding-left: 2px;
  gap: 5px;
  color: #4d5567;
`;
const Tab = styled.button<{ $on?: boolean }>`
  display: flex;
  align-items: center;
  gap: 1px;
  height: 20px;
  padding: 0 3px;
  border: 1px solid ${(p) => (p.$on ? "#c4dfe6" : "transparent")};
  border-top: 0;
  border-radius: 0 0 3px 3px;
  background: ${(p) => (p.$on ? "#edf1f8" : "none")};
  font: 11px/16px ${UI};
`;

/* ---------- results canvas ---------- */

const Canvas = styled.section`
  position: relative;
  min-width: 0;
  border: solid #6d7180;
  border-width: 1px 0 0 1px;
  border-right: 2px solid #f4f5f9;
  background: #ff0;
  font: 11px/14px "Liberation Sans", Arial, sans-serif;
`;
const Plot = styled.svg`
  position: absolute;
  inset: 0;
  width: 100%;
  height: 100%;
`;
const Caption = styled.p<{ $bottom?: boolean }>`
  position: absolute;
  left: 4px;
  ${(p) => (p.$bottom ? "bottom: 5px" : "top: 5px")};
  margin: 0;
`;
const ValueFlag = styled.output`
  position: absolute;
  left: 454px;
  top: 426px;
  width: 54px;
  height: 18px;
  border: 1px solid #8c86c8;
  box-shadow: 1px 1px 0 #223;
  background: #b9b9f3;
  color: #b01840;
  font: bold 11px/16px "Liberation Mono", monospace;
  text-align: center;
`;
const Triad = styled.svg`
  position: absolute;
  left: 50px;
  top: 775px;
`;

const LEVELS: [string, string][] = [
  ["#00ff00", "0,128 40,111 144,78 252,57 360,46 468,41 575,40 681,37 790,27 896,15 1004,5 1112,6 1217,26 1325,67 1325,1575 -5,1575 -5,130"],
  ["#ffff00", "-5,1413 36,1398 144,1378 252,1387 360,1447 375,1494 372,1575 -5,1575"],
  ["#ffff00", "1325,1263 1217,1251 1110,1248 1004,1253 896,1287 809,1373 896,1425 934,1495 965,1575 1325,1575"],
  ["#00e68a", "553,1575 575,1554 681,1535 790,1560 803,1575"],
  ["#00e68a", "-5,341 38,304 78,276 145,238 252,199 360,177 468,163 575,157 681,152 790,149 896,146 1004,149 1110,166 1217,207 1325,269 1325,1060 1217,1036 1110,1039 1004,1073 896,1106 790,1130 681,1147 575,1163 468,1179 360,1190 252,1196 144,1190 38,1171 -5,1156"],
  ["#00f8f8", "-5,604 37,518 148,407 252,350 360,315 468,294 575,282 681,277 805,278 896,287 1004,311 1110,359 1169,399 1217,454 1325,513 1325,837 1217,778 1110,815 1042,886 896,976 820,1009 790,1020 681,1043 575,1058 468,1067 360,1068 252,1059 144,1025 110,1008 40,946 -5,887"],
  ["#0099ff", "119,764 132,642 146,618 228,518 252,501 360,451 468,421 575,404 681,401 790,418 896,464 962,520 992,640 953,764 896,828 830,885 790,907 681,941 575,957 468,960 360,949 252,920 196,885 146,820"],
  ["#0000fa", "319,764 335,642 360,622 468,565 575,541 681,538 790,611 809,642 785,764 681,821 575,832 468,830 360,794"],
];
const Line = styled.path<{ $c: string; $dash?: string }>`
  fill: none;
  stroke: ${(p) => p.$c};
  stroke-dasharray: ${(p) => p.$dash ?? "none"};
  vector-effect: non-scaling-stroke;
`;
const Contour = styled.polygon`
  stroke: #7a2a10;
  vector-effect: non-scaling-stroke;
`;

const ResultsCanvas = () => (
  <Canvas aria-label="Výsledky m-y">
    <Plot viewBox="0 0 1320 1568" preserveAspectRatio="none">
      {LEVELS.map(([c, pts]) => <Contour key={pts} points={pts} fill={c} />)}
      <Line $c="#b9b9b9" $dash="1 1" d="M252 0V1568M1110 0V1568M0 277H1320" />
      <Line $c="#a8c8a0" d="M252 1250H1320" />
      <Line $c="#b4b4b4" $dash="14 5" d="M510 0V569H0M724 0V715H1320M0 812H639V1568M1320 812H724V1568" />
      <Line $c="#111" d="M681 0V764H0" />
      <Line $c="#10e0a0" d="M681 764H1320" />
      <Line $c="#10ff50" d="M681 764V1147" />
      <circle cx="681" cy="764" r="3" fill="#b00000" />
    </Plot>
    <Caption>
      Základní vnitřní síly m-y [kNm/m]
      <br />
      KV1 : MSÚ (STR/GEO) - trvalá/dočasná - rovn. 6.10
    </Caption>
    <ValueFlag>-21.863</ValueFlag>
    <Triad width="64" height="68" viewBox="0 0 64 68">
      <path d="M6 10H38" stroke="#f00000" strokeWidth="2" />
      <path d="M37 7.500L45 10L37 12.500Z" fill="#a80000" />
      <rect x="3" y="7" width="5" height="6" fill="#0000d0" />
      <path d="M4 8H7L4 12H7" fill="none" stroke="#00b0e0" />
      <path d="M5.500 37V43" stroke="#00c000" strokeWidth="2" />
      <path d="M2.500 42H8.500L5.500 50Z" fill="#00a000" />
      <text x="52" y="14" fontSize="10" fontFamily="Liberation Sans" fill="#c04000">X</text>
      <text x="2" y="64" fontSize="10" fontFamily="Liberation Sans" fill="#60c000">Y</text>
    </Triad>
    <Caption $bottom>Max m-y: 16.252, Min m-y: -21.863 kNm/m</Caption>
  </Canvas>
);

/* ---------- legend panel ---------- */

const LegendBody = styled.div`
  display: flex;
  flex-direction: column;
  flex: 1;
  margin-right: 2px;
  padding: 4px 4px 0 5px;
  border: solid #a5abb8;
  border-width: 1px 0 1px 1px;
  background: #f0f0f0;
  font: 11px/16px ${UI};
`;
const Sub = styled.sub`
  font-size: 10px;
  line-height: 0;
  vertical-align: -1px;
`;
const LegendBox = styled.div`
  display: flex;
  justify-content: center;
  margin-top: 3px;
  padding: 1px 0 7px 0;
  border: 1px solid #a0a0a0;
  border-right-color: #fff;
  border-bottom-color: #fff;
  background: #fcf9f1;
`;
const Swatches = styled.div`
  margin: 9px 9px 8px 0;
  border-bottom: 1px solid #000;
`;
const Swatch = styled.div<{ $c: string }>`
  position: relative;
  width: 27px;
  height: 17px;
  border: solid #000;
  border-width: 1px 1px 0;
  background: ${(p) => p.$c};
  &::after {
    content: "";
    position: absolute;
    left: 100%;
    top: -1px;
    width: 6px;
    height: 1px;
    background: #000;
  }
`;
const Scale = styled.ul`
  margin: 0;
  padding: 0;
  list-style: none;
  text-align: right;
  line-height: 17px;
`;
const Extremes = styled.dl`
  display: grid;
  grid-template-columns: 58px 53px;
  margin: 9px 0 0;
  text-align: right;
  line-height: 17px;
  border: 1px solid #dfe3f5;
  border-right-color: #aaaaf0;
  border-bottom-color: #aaaaf0;
  background: #f1f4fb;
  dd { margin: 0; }
`;
const FloatingTool = styled.button`
  position: absolute;
  right: 6px;
  top: 562px;
  display: grid;
  place-items: center;
  width: 24px;
  height: 22px;
  padding: 0;
  border: 1px solid #a0a4ad;
  background: #dcdfe6;
`;
const COLORS = ["#be0000", "#ff0000", "#ffa800", "#cfcf00", "#ffff00", "#00ff00", "#00e68a", "#00f8f8", "#0099ff", "#0000ff", "#0000a0"];
const VALUES = ["16.252", "12.787", "9.322", "5.857", "2.392", "-1.073", "-4.538", "-8.003", "-11.468", "-14.933", "-18.398", "-21.863"];

/* ---------- status bar ---------- */

const StatusBar = styled.footer`
  display: flex;
  align-items: center;
  height: 21px;
  flex: none;
  padding-left: 4px;
  border-top: 1px solid #fff;
  background: linear-gradient(#d9dce2, #a9aeb9 50%, #bcc1cb);
  border-bottom: 1px solid #666a74;
  font: 11px/16px ${UI};
  color: #23262e;
`;
const Message = styled.span`
  flex: 1;
`;
const SnapButton = styled.button<{ $w: number; $up?: boolean }>`
  width: ${(p) => p.$w}px;
  height: 19px;
  margin-right: 2px;
  padding: 0 0 2px;
  border: 1px solid;
  border-color: ${(p) => (p.$up ? "#fff #888 #888 #fff" : "#111 #fff #fff #111")};
  background: ${(p) => (p.$up ? "#c6cad2" : "none")};
  font: 12px/16px "Liberation Sans", sans-serif;
`;
const Cell = styled.span<{ $w: number }>`
  width: ${(p) => p.$w}px;
  height: 18px;
  border-left: 1px solid #8a8f9a;
`;
const SNAPS: [string, number, boolean?][] = [["UCHOP", 46], ["RASTR", 41, true], ["KARTEZ", 50], ["OUCHOP", 55], ["VLINIE", 41], ["DXF", 28]];

const MENUS = ["_Soubor", "Úpr_avy", "_Zobrazit", "Vlož_it", "Vý_počet", "Výsled_ky", "Nástro_je", "_Tabulka", "Nasta_vení", "Pří_davné moduly", "_Okno", "_Nápověda"];

export default function App() {
  return (
    <Shell>
      <GlobalStyle />
      <TitleBar>
        <Glyph n="app" />
        <Title>RFEM 5.25.02 x64 - [deska*]</Title>
        <WindowButton aria-label="Minimalizovat"><svg width="11" height="11"><path d="M0 5.500H11" stroke="#000" /></svg></WindowButton>
        <WindowButton aria-label="Maximalizovat"><svg width="11" height="11"><path d="M.5.5H10.500V10.500H.5Z" fill="none" stroke="#000" /></svg></WindowButton>
        <WindowButton aria-label="Zavřít"><svg width="11" height="11"><path d="M.5.5L10.500 10.500M10.500.5L.5 10.500" stroke="#000" /></svg></WindowButton>
      </TitleBar>
      <MenuBar>
        <svg width="16" height="13" viewBox="0 0 16 13" aria-hidden="true">
          <rect width="16" height="13" fill="#1b2c6b" />
          <path d="M0 8.500H16M7.500 1V12M0 8L7 2L11 8M7.500 2L16 8M4 5V8M11 5V8" stroke="#fff" fill="none" />
        </svg>
        <Menus>
          {MENUS.map((m) => {
            const k = m.indexOf("_");
            return (
              <MenuButton key={m} type="button">
                {m.slice(0, k)}<u>{m[k + 1]}</u>{m.slice(k + 2)}
              </MenuButton>
            );
          })}
        </Menus>
        <MdiButtons>
          <MdiButton aria-label="Minimalizovat okno"><svg width="9" height="9"><path d="M1 8H8" stroke="#777" strokeWidth="2" /></svg></MdiButton>
          <MdiButton aria-label="Obnovit okno"><svg width="10" height="9"><path d="M3 2.500V1H9.500V6H8M.5 3.500H7.500V8.500H.5Z" stroke="#777" fill="none" strokeWidth="1.300" /></svg></MdiButton>
          <MdiButton aria-label="Zavřít okno"><svg width="9" height="9"><path d="M1 1L8 8M8 1L1 8" stroke="#777" strokeWidth="2" /></svg></MdiButton>
        </MdiButtons>
      </MenuBar>
      <Tools rows={ROW1} />
      <Tools rows={ROW2} />
      <Workspace>
        <SidePanel>
          <PanelHead>
            <PanelTitle>Navigátor projektu - Zobrazit</PanelTitle>
            <HeadTools />
          </PanelHead>
          <TreeFrame>
            <Tree>
              <TreeRows />
              <MarkBox />
              <MarkArrow width="104" height="50" viewBox="0 0 104 50">
                <path d="M101 3L14 43" stroke="#ed1c24" strokeWidth="2" />
                <path d="M1 48L11 36L17 48.500Z" fill="#ed1c24" />
              </MarkArrow>
            </Tree>
            <Scroll>
              <ScrollButton aria-label="Nahoru"><Chevron d="M1 6.500L4.500 3L8 6.500" /></ScrollButton>
              <Track><Space $size={161} /><Thumb $size={278} /><Space $size={385} /></Track>
              <ScrollButton aria-label="Dolů"><Chevron d="M1 3L4.500 6.500L8 3" /></ScrollButton>
            </Scroll>
            <Scroll $row>
              <ScrollButton aria-label="Doleva"><Chevron d="M6.500 1L3 4.500L6.500 8" /></ScrollButton>
              <Track $row><Space $size={2} /><Thumb $size={291} /><Space $size={5} /></Track>
              <ScrollButton aria-label="Doprava"><Chevron d="M3 1L6.500 4.500L3 8" /></ScrollButton>
            </Scroll>
          </TreeFrame>
          <TabStrip>
            <Tab type="button"><Glyph n="dataTab" />Data</Tab>
            <Tab type="button" $on><Glyph n="viewTab" />Zobrazit</Tab>
            <Tab type="button"><Glyph n="microBlue" />Pohledy</Tab>
            <Tab type="button"><Glyph n="rainbowTab" />Výsledky</Tab>
          </TabStrip>
        </SidePanel>
        <ResultsCanvas />
        <SidePanel>
          <PanelHead $dim>
            <PanelTitle>Panel</PanelTitle>
            <HeadTools />
          </PanelHead>
          <LegendBody>
            <span>Základní vnitřní síly</span>
            <span>m<Sub>y</Sub> [kNm/m]</span>
            <LegendBox>
              <Swatches>{COLORS.map((c) => <Swatch key={c} $c={c} />)}</Swatches>
              <Scale>{VALUES.map((v) => <li key={v}>{v}</li>)}</Scale>
            </LegendBox>
            <Extremes>
              <dt>Max:</dt><dd>16.252</dd>
              <dt>Min:</dt><dd>-21.863</dd>
            </Extremes>
          </LegendBody>
          <TabStrip>
            <Tab type="button" $on aria-label="Barevná škála"><Glyph n="legendTab" /></Tab>
            <Tab type="button" aria-label="Součinitele"><Glyph n="scales" /></Tab>
            <Tab type="button" aria-label="Filtr"><Glyph n="microscope" /></Tab>
          </TabStrip>
        </SidePanel>
      </Workspace>
      <StatusBar>
        <Message>Hotovo</Message>
        {SNAPS.map(([t, w, up]) => <SnapButton key={t} type="button" $w={w} $up={up}>{t}</SnapButton>)}
        <Cell $w={188} /><Cell $w={81} /><Cell $w={81} /><Cell $w={74} /><Cell $w={76} />
        <svg width="14" height="14" viewBox="0 0 14 14"><path d="M10 2h2v2h-2zM10 6h2v2h-2zM6 6h2v2h-2zM10 10h2v2h-2zM6 10h2v2h-2zM2 10h2v2h-2z" fill="#6d727e" /></svg>
      </StatusBar>
      <FloatingTool aria-label="Detail výsledků"><Glyph n="loupe" /></FloatingTool>
    </Shell>
  );
}
